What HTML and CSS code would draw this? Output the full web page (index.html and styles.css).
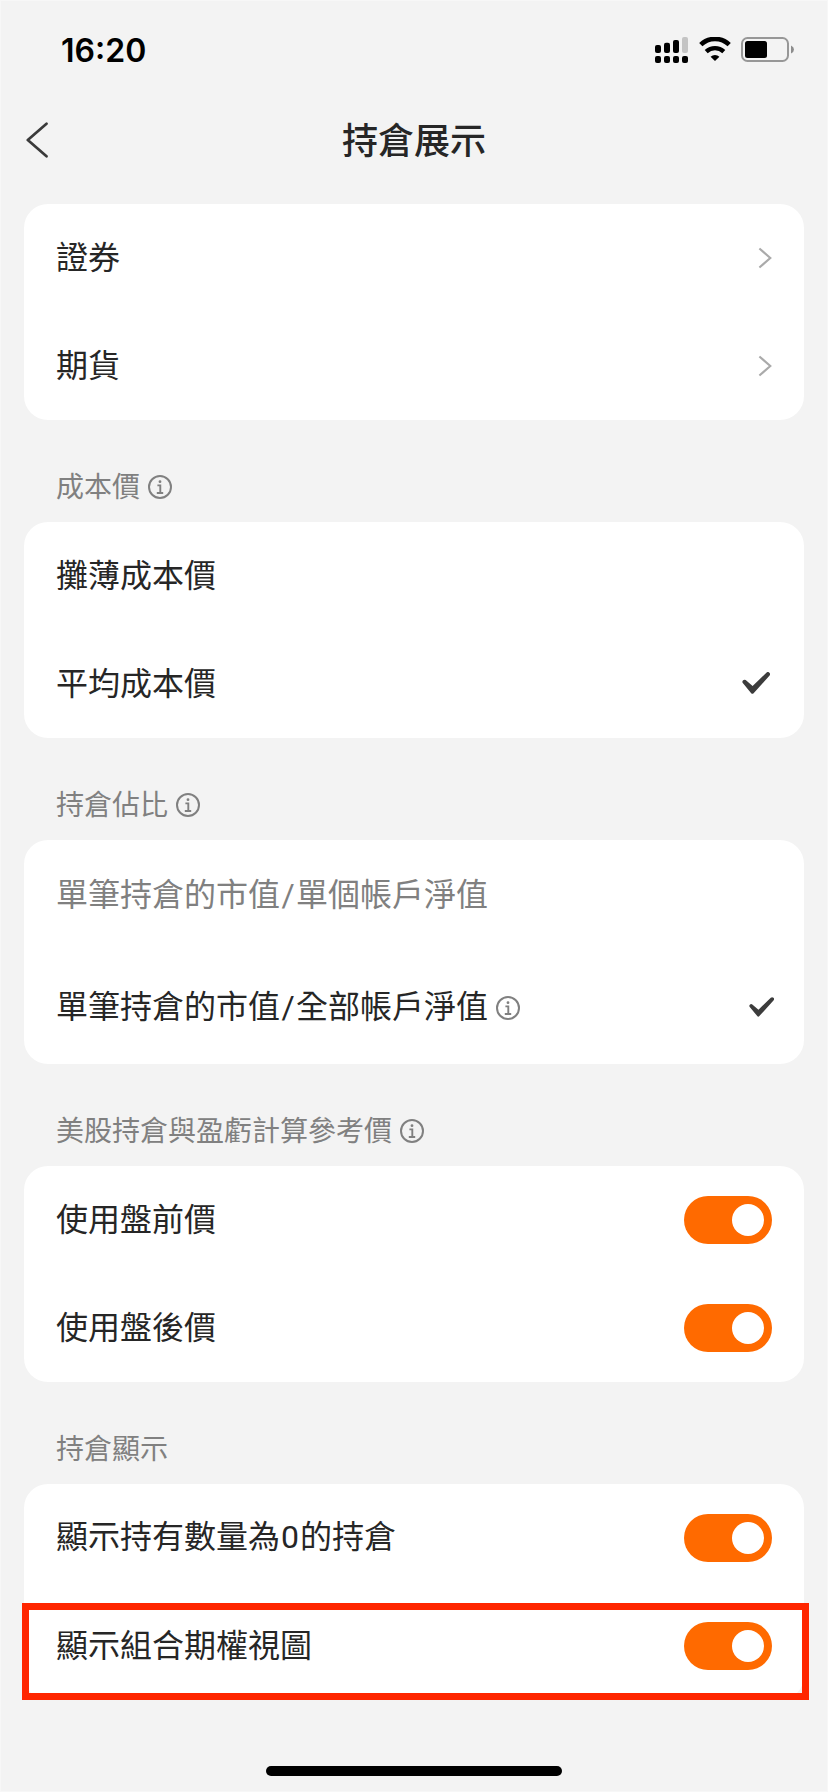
FILE: index.html
```html
<!DOCTYPE html>
<html lang="zh-Hant">
<head>
    <meta charset="UTF-8">
    <meta name="viewport" content="width=device-width, initial-scale=1.0">
    <title>持倉展示</title>
    <link rel="stylesheet" href="styles.css">
</head>
<body>
    <!-- shared icons -->
    <svg class="sprite" aria-hidden="true">
        <symbol id="info" viewBox="0 0 24 24">
            <circle cx="12" cy="12" r="11" fill="none" stroke="currentColor" stroke-width="2"/>
            <circle cx="12" cy="6.7" r="1.4" fill="currentColor"/>
            <path d="M9.4 10.4h2.9v7.4M8.8 18h6.4" fill="none" stroke="currentColor" stroke-width="1.9"/>
        </symbol>
        <symbol id="arrow" viewBox="0 0 14 22">
            <path d="M1.4 1.5L12.3 11 1.4 20.5" fill="none" stroke="currentColor" stroke-width="2.1"/>
        </symbol>
        <symbol id="check" viewBox="0 0 28 22">
            <path d="M.6 10.7a2.1 2.1 0 0 1 3.1-2.6L10.6 14 24.4.7a2.1 2.1 0 0 1 3 3L11.6 21.2q-1.2 1.2-2.4 0z" fill="currentColor"/>
        </symbol>
    </svg>

    <div class="screen">
        <div class="status-bar">
            <span class="time">16:20</span>
            <div class="status-icons">
                <svg class="signal" width="33" height="26" viewBox="0 0 33 26">
                    <rect x="0" y="8" width="6" height="8" rx="2"/>
                    <rect x="9" y="5.8" width="6" height="10.2" rx="2"/>
                    <rect x="18" y="3" width="6" height="13" rx="2"/>
                    <rect x="27" y="0" width="6" height="16" rx="2" fill="#c4c4c4"/>
                    <rect x="0" y="19" width="6" height="7" rx="2"/>
                    <rect x="9" y="19" width="6" height="7" rx="2"/>
                    <rect x="18" y="19" width="6" height="7" rx="2"/>
                    <rect x="27" y="19" width="6" height="7" rx="2"/>
                </svg>
                <svg class="wifi" width="32" height="24" viewBox="0 0 32 24">
                    <path d="M1.8 7.7a20.3 20.3 0 0 1 28.4 0" fill="none" stroke="#000" stroke-width="4.6"/>
                    <path d="M7.2 14.6a13 13 0 0 1 17.6 0" fill="none" stroke="#000" stroke-width="4.4"/>
                    <path d="M16 24l-4.4-4.3a6.4 6.4 0 0 1 8.8 0z"/>
                </svg>
                <svg class="battery" width="54" height="26" viewBox="0 0 54 26">
                    <rect x="1" y="1" width="46" height="23" rx="5.5" fill="none" stroke="#979797" stroke-width="2"/>
                    <rect x="4" y="4" width="22" height="17" rx="2.5"/>
                    <path d="M50 8.4q3 1.4 3 4.1t-3 4.1z" fill="#8c8c8c"/>
                </svg>
            </div>
        </div>

        <header class="navbar">
            <svg class="back" width="24" height="36" viewBox="0 0 24 36">
                <path d="M20.5 1.7L1.8 18 20.5 34.3" fill="none" stroke="#3a3a3a" stroke-width="2.7" stroke-linecap="round" stroke-linejoin="round"/>
            </svg>
            <h1>持倉展示</h1>
        </header>

        <main>
            <div class="card">
                <div class="row">
                    <span class="label">證券</span>
                    <svg class="arrow"><use href="#arrow"/></svg>
                </div>
                <div class="row">
                    <span class="label">期貨</span>
                    <svg class="arrow"><use href="#arrow"/></svg>
                </div>
            </div>

            <h2><span>成本價</span> <svg class="info"><use href="#info"/></svg></h2>
            <div class="card">
                <div class="row">
                    <span class="label">攤薄成本價</span>
                </div>
                <div class="row">
                    <span class="label">平均成本價</span>
                    <svg class="check"><use href="#check"/></svg>
                </div>
            </div>

            <h2><span>持倉佔比</span> <svg class="info"><use href="#info"/></svg></h2>
            <div class="card ratio">
                <div class="row muted">
                    <span class="label">單筆持倉的市值<span class="slash">/</span>單個帳戶淨值</span>
                </div>
                <div class="row">
                    <span class="label">單筆持倉的市值<span class="slash">/</span>全部帳戶淨值</span>
                    <svg class="info"><use href="#info"/></svg>
                    <svg class="check"><use href="#check"/></svg>
                </div>
            </div>

            <h2><span>美股持倉與盈虧計算參考價</span> <svg class="info"><use href="#info"/></svg></h2>
            <div class="card">
                <div class="row">
                    <span class="label">使用盤前價</span>
                    <div class="toggle"></div>
                </div>
                <div class="row">
                    <span class="label">使用盤後價</span>
                    <div class="toggle"></div>
                </div>
            </div>

            <h2><span>持倉顯示</span></h2>
            <div class="card">
                <div class="row">
                    <span class="label">顯示持有數量為<span class="num">0</span>的持倉</span>
                    <div class="toggle"></div>
                </div>
                <div class="row highlight">
                    <span class="label">顯示組合期權視圖</span>
                    <div class="toggle"></div>
                </div>
            </div>
        </main>

        <div class="home-indicator"></div>
    </div>
</body>
</html>
```
FILE: styles.css
```css
* {
    margin: 0;
    padding: 0;
    box-sizing: border-box;
}

body {
    font-family: "Noto Sans CJK TC", sans-serif;
    background-color: #f3f3f3;
    color: #262626;
}

svg {
    display: block;
    flex-shrink: 0;
}

.sprite {
    display: none;
}

.screen {
    width: 828px;
    height: 1792px;
    display: flex;
    flex-direction: column;
    overflow: hidden;
    box-shadow: inset 0 0 0 1px #f7f7f7;
}

/* status bar */
.status-bar {
    height: 100px;
    padding: 0 33px 0 61px;
    display: flex;
    justify-content: space-between;
    align-items: center;
}

.time {
    font-family: Inter, sans-serif;
    font-size: 32px;
    font-weight: 600;
    color: #000;
}

.status-icons {
    display: flex;
    align-items: flex-start;
}

.wifi {
    margin-left: 11px;
}

.battery {
    margin-left: 10px;
}

/* title bar */
.navbar {
    height: 80px;
    padding: 0 26px;
    display: grid;
    grid-template-columns: 24px 1fr 24px;
    align-items: center;
}

.navbar h1 {
    padding-bottom: 5px;
    font-size: 36px;
    font-weight: 500;
    line-height: 52px;
    text-align: center;
}

main {
    margin-top: 24px;
    padding: 0 24px;
}

h2 {
    height: 102px;
    padding: 32px 32px 0;
    display: flex;
    align-items: center;
    gap: 8px;
    font-size: 28px;
    font-weight: 400;
    color: #808080;
}

h2 span {
    padding-bottom: 4px;
}

.card {
    background-color: #fff;
    border-radius: 24px;
}

.row {
    height: 108px;
    padding: 0 32px;
    display: flex;
    align-items: center;
    font-size: 32px;
    line-height: 48px;
    position: relative;
}

.label {
    padding-bottom: 6px;
}

.ratio .row {
    height: 112px;
}

.muted {
    color: #808080;
}

.slash,
.num {
    display: inline-block;
    font-family: Roboto, sans-serif;
    text-align: center;
}

.slash {
    width: 16px;
}

.num {
    width: 20px;
}

.info {
    width: 24px;
    height: 24px;
    color: #808080;
}

.row .info {
    margin-left: 8px;
}

.arrow {
    width: 14px;
    height: 22px;
    margin-left: auto;
    color: #aaa;
}

.check {
    width: 28px;
    height: 22px;
    margin: 0 2px 2px auto;
    color: #3c3c3c;
}

.ratio .check {
    width: 25px;
    height: 20px;
    margin-right: -2px;
}

.toggle {
    width: 88px;
    height: 48px;
    margin-left: auto;
    padding: 8px;
    display: flex;
    justify-content: flex-end;
    border-radius: 24px;
    background-color: #ff6a00;
}

.toggle::after {
    content: "";
    width: 32px;
    height: 32px;
    border-radius: 50%;
    background-color: #fff;
}

/* red frame round the last option */
.highlight::before {
    content: "";
    position: absolute;
    top: 11px;
    right: -5px;
    bottom: 0;
    left: -2px;
    border: 7px solid #ff2600;
}

.home-indicator {
    width: 296px;
    height: 10px;
    margin: auto auto 16px;
    border-radius: 5px;
    background-color: #000;
}
```
